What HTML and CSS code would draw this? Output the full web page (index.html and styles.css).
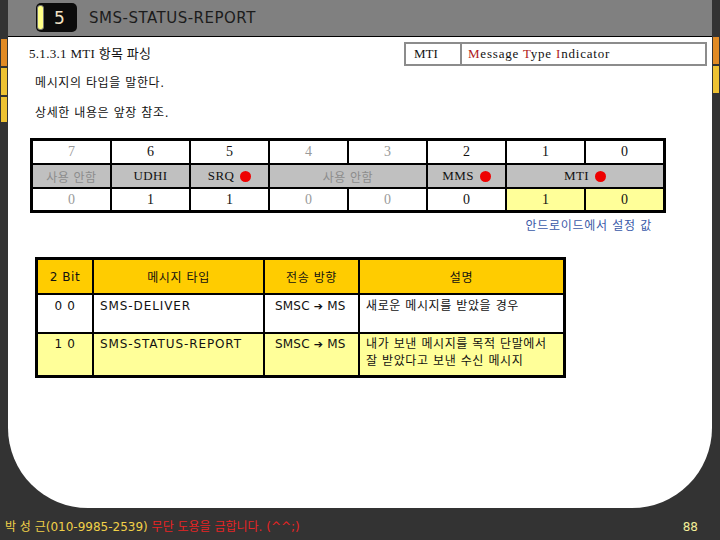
FILE: index.html
```html
<!DOCTYPE html>
<html lang="ko">
<head>
<meta charset="utf-8">
<link rel="stylesheet" href="styles.css">
</head>
<body>
<div class="slide">
  <div class="top">
    <div class="strip strip-left">
      <span class="seg orange"></span>
      <span class="seg yellow"></span>
      <span class="seg yellow short"></span>
    </div>
    <div class="center">
      <header class="header">
        <div class="badge"><span class="pill"></span><span class="num">5</span></div>
        <h1 class="title">SMS-STATUS-REPORT</h1>
      </header>
      <main class="main">
        <div class="subrow">
          <div class="subtitle">5.1.3.1 MTI 항목 파싱</div>
          <div class="mtibox">
            <div class="mti-key">MTI</div>
            <div class="mti-val"><span class="red">M</span>essage <span class="red">T</span>ype <span class="red">I</span>ndicator</div>
          </div>
        </div>
        <p class="line first">메시지의 타입을 말한다.</p>
        <p class="line">상세한 내용은 앞장 참조.</p>

        <div class="bits">
          <div class="c gray">7</div>
          <div class="c">6</div>
          <div class="c">5</div>
          <div class="c gray">4</div>
          <div class="c gray">3</div>
          <div class="c">2</div>
          <div class="c">1</div>
          <div class="c">0</div>

          <div class="c name grayt">사용 안함</div>
          <div class="c name">UDHI</div>
          <div class="c name">SRQ<span class="dot"></span></div>
          <div class="c name grayt span2">사용 안함</div>
          <div class="c name">MMS<span class="dot"></span></div>
          <div class="c name span2">MTI<span class="dot"></span></div>

          <div class="c gray">0</div>
          <div class="c">1</div>
          <div class="c">1</div>
          <div class="c gray">0</div>
          <div class="c gray">0</div>
          <div class="c">0</div>
          <div class="c yel">1</div>
          <div class="c yel">0</div>
        </div>
        <div class="caption">안드로이드에서 설정 값</div>

        <div class="types">
          <div class="h">2 Bit</div>
          <div class="h">메시지 타입</div>
          <div class="h">전송 방향</div>
          <div class="h">설명</div>

          <div class="d ctr">0 0</div>
          <div class="d lat">SMS-DELIVER</div>
          <div class="d dir">SMSC <span class="arrow">➔</span> MS</div>
          <div class="d">새로운 메시지를 받았을 경우</div>

          <div class="d ctr y">1 0</div>
          <div class="d lat y">SMS-STATUS-REPORT</div>
          <div class="d dir y">SMSC <span class="arrow">➔</span> MS</div>
          <div class="d y">내가 보낸 메시지를 목적 단말에서<br>잘 받았다고 보낸 수신 메시지</div>
        </div>
      </main>
    </div>
    <div class="strip strip-right">
      <span class="seg orange"></span>
      <span class="seg yellow"></span>
    </div>
  </div>
  <footer class="footer">
    <div class="credit"><span class="who">박 성 근(010-9985-2539)</span> <span class="warn">무단 도용을 금합니다. (^^;)</span></div>
    <div class="page">88</div>
  </footer>
</div>
</body>
</html>
```

FILE: styles.css
```css
* { box-sizing: border-box; }
html, body { margin: 0; padding: 0; }
body {
  width: 720px;
  height: 540px;
  background: #333333;
  font-family: "DejaVu Sans", "Noto Sans CJK KR", sans-serif;
  color: #111;
  overflow: hidden;
}
.slide { width: 720px; height: 540px; display: flex; flex-direction: column; }
.top { display: flex; height: 508px; }
.strip { width: 8px; display: flex; flex-direction: column; padding-top: 39px; padding-left: 1px; gap: 2px; }
.strip-right { padding-top: 37px; padding-left: 1px; }
.seg { display: block; width: 6px; height: 27px; }
.seg.orange { background: #e08a24; }
.seg.yellow { background: #eec232; }
.seg.short { height: 25px; }
.center { width: 704px; display: flex; flex-direction: column; }
.header {
  height: 37px;
  background: #808080;
  border-bottom: 1px solid #000;
  display: flex;
  align-items: center;
  padding-left: 28px;
  gap: 12px;
}
.badge {
  width: 41px; height: 29px;
  background: #0c0c0c;
  border-radius: 5px;
  display: flex; align-items: center;
  padding-left: 1px;
  margin-top: -1px;
}
.pill {
  width: 7px; height: 25px;
  background: #ffff88;
  border: 1px solid #777;
  border-radius: 3px;
}
.num {
  flex: 1;
  text-align: center;
  color: #f3e2c4;
  font-size: 17px;
  padding-right: 2px;
}
.title {
  margin: 0;
  font-weight: normal;
  font-size: 15px;
  letter-spacing: 0.5px;
  color: #1c1c1c;
}
.main {
  flex: 1;
  background: #fff;
  border-radius: 0 0 80px 80px;
  padding: 5px 5px 0 22px;
  font-size: 12px;
}
.subrow { display: flex; justify-content: space-between; align-items: center; }
.subtitle {
  font-family: "Liberation Serif", "Noto Sans CJK KR", serif;
  font-size: 13px;
  letter-spacing: 0.3px;
  margin-left: -1px;
  margin-top: -3px;
}
.mtibox {
  width: 303px; height: 24px;
  border: 2px solid #8c8c8c;
  display: flex;
  font-family: "Liberation Serif", serif;
  font-size: 13px;
}
.mti-key { width: 56px; border-right: 2px solid #8c8c8c; padding-left: 8px; line-height: 20px; }
.mti-val { padding-left: 6px; line-height: 20px; letter-spacing: 0.8px; }
.red { color: #b01818; }
.line { margin: 10px 0 0 5px; line-height: 20px; font-size: 12px; letter-spacing: 0.6px; }
.line.first { margin-top: 7px; }

.bits {
  margin-top: 15px;
  width: 636px;
  display: grid;
  grid-template-columns: repeat(8, 1fr);
  grid-template-rows: 22px 22px 21px;
  gap: 2px;
  padding: 3px;
  background: #000;
  font-family: "Liberation Serif", "Noto Sans CJK KR", serif;
  font-size: 14px;
}
.c { background: #fff; display: flex; align-items: center; justify-content: center; }
.c.gray { color: #9a9a9a; }
.c.name { background: #c0c0c0; font-size: 13px; letter-spacing: 0.4px; }
.c.grayt { color: #8c8c8c; font-family: "Noto Sans CJK KR", sans-serif; font-size: 12px; letter-spacing: 0.6px; }
.c.yel { background: #ffff99; }
.span2 { grid-column: span 2; }
.dot { display: inline-block; width: 11px; height: 11px; border-radius: 50%; background: #ee0000; margin-left: 6px; }
.caption {
  width: 636px;
  text-align: right;
  padding-right: 14px;
  margin-top: 5px;
  color: #3a5aa8;
  font-size: 12px;
  line-height: 16px;
  letter-spacing: 0.7px;
}

.types {
  margin: 23px 0 0 5px;
  width: 531px;
  display: grid;
  grid-template-columns: 54px 169px 93px 203px;
  grid-template-rows: 33px 37px 41px;
  gap: 2px;
  padding: 3px;
  background: #000;
  font-size: 12px;
  letter-spacing: 0.6px;
}
.h { background: #ffcc00; display: flex; align-items: center; justify-content: center; }
.d { background: #fff; padding: 3px 0 0 6px; line-height: 17px; }
.d.ctr { text-align: center; padding-left: 0; }
.d.lat { letter-spacing: 0.9px; }
.d.dir { padding-left: 10px; letter-spacing: 0.2px; }
.d.y { background: #ffff99; padding-top: 2px; }
.arrow { font-size: 11px; }

.footer {
  height: 32px;
  display: flex;
  justify-content: space-between;
  padding: 11px 22px 0 5px;
  font-size: 12px;
  line-height: 16px;
}
.who { color: #f0d048; }
.warn { color: #e82424; }
.page { color: #f4f09a; }
```
